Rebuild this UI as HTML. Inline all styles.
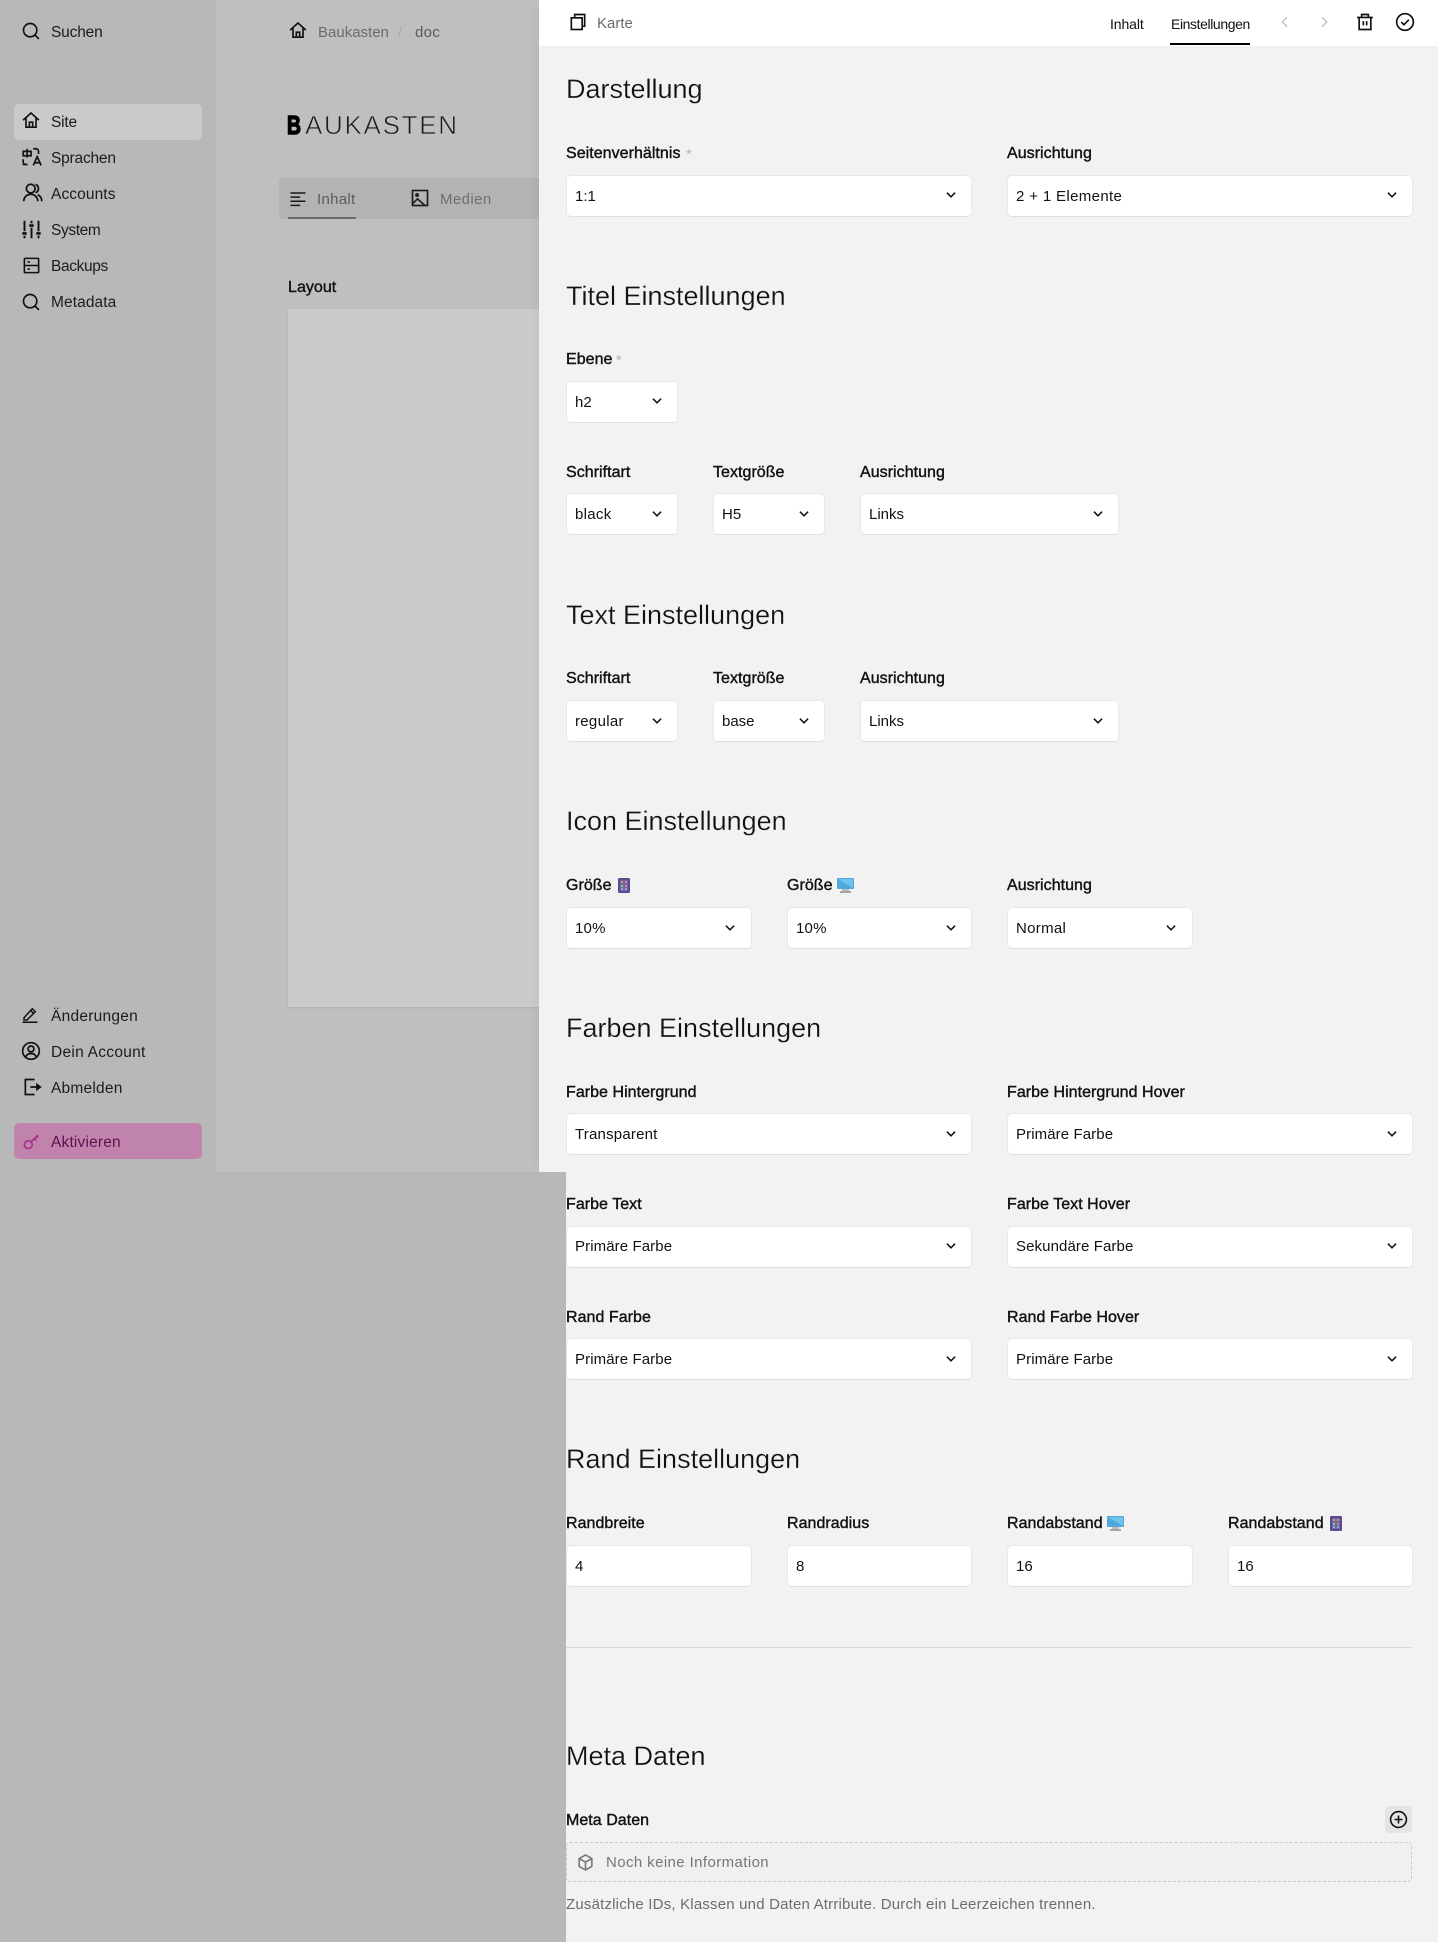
<!DOCTYPE html>
<html lang="de"><head><meta charset="utf-8"><title>Baukasten</title>
<style>
html,body{margin:0;padding:0;width:1438px;height:1942px;overflow:hidden;background:#b8b8b8}
body{position:relative;font-family:"Liberation Sans",sans-serif;font-size:15px;color:#111}
div,span,svg{position:absolute;display:block}
.t{height:20px;line-height:20px;white-space:nowrap;margin-top:1px}
.side{color:#1c1c1c;left:51px;font-size:15.5px}
.h{font-size:27px;height:34px;line-height:34px;left:566px;color:#111;white-space:nowrap;-webkit-text-stroke:.25px #f2f2f2}
.l{font-size:16px;height:20px;line-height:20px;margin-top:1px;white-space:nowrap;color:#111;-webkit-text-stroke:.4px #111;letter-spacing:.04px}
.s{height:40px;background:#fff;border:1px solid #e8e8e8;border-bottom-color:#dedede;border-radius:5px;box-sizing:content-box}
.v{font-size:15px;height:20px;line-height:20px;margin-top:1px;white-space:nowrap;color:#111}
svg.i{fill:none;stroke:#111;stroke-width:2}
svg.c{width:14px;height:14px;fill:none;stroke:#111;stroke-width:2.6}
</style></head><body>

<div style="left:0;top:0;width:216px;height:1172px;background:#b8b8b8"></div>
<div style="left:216px;top:0;width:323px;height:1172px;background:#bfbfbf;box-shadow:inset 1px 0 0 #bbb"></div>

<!-- sidebar -->
<svg class="i" viewBox="0 0 24 24" style="left:21px;top:21px;width:20px;height:20px"><circle cx="11" cy="11" r="8"/><path d="M16.800 16.800L21.500 21.500"/></svg>
<div class="t side" style="top:22px;letter-spacing:-.17px">Suchen</div>

<div style="left:14px;top:104px;width:188px;height:36px;background:#cacaca;border-radius:5px"></div>
<svg class="i" viewBox="0 0 24 24" style="left:21px;top:110px;width:20px;height:21px"><path d="M2.500 11.500L12 3l9.500 8.500M6 9v11h12V9M10 20v-6h4v6"/></svg>
<div class="t side" style="top:112px;letter-spacing:-.2px">Site</div>

<svg class="i" viewBox="0 0 24 24" style="left:21px;top:147px;width:21px;height:21px;stroke-width:1.900"><path d="M7 2v10M2.500 5h9v5h-9zM2.500 14v3a3 3 0 0 0 3 3h2M4 20.500l-2-1M14 2h3a3 3 0 0 1 3 3v3M14 21l4.500-10 4.500 10M15.500 18h6"/></svg>
<div class="t side" style="top:148px;letter-spacing:-.2px">Sprachen</div>

<svg class="i" viewBox="0 0 24 24" style="left:22px;top:182px;width:21px;height:21px"><circle cx="10" cy="7.500" r="5"/><path d="M2 22a8 8 0 0 1 16 0M15.500 2.800a5 5 0 0 1 0 9.400M18 14.500a8 8 0 0 1 4.500 7.500"/></svg>
<div class="t side" style="top:184px;letter-spacing:.1px">Accounts</div>

<svg class="i" viewBox="0 0 24 24" style="left:21px;top:219px;width:21px;height:21px;stroke-width:2.200"><path d="M4 2v12M4 19v3M12 2v3M12 10v12M20 2v12M20 19v3"/><path d="M1.500 16.500h5M9.500 7.500h5M17.500 16.500h5" stroke-width="3"/></svg>
<div class="t side" style="top:220px;letter-spacing:-.38px">System</div>

<svg class="i" viewBox="0 0 24 24" style="left:22px;top:256px;width:19px;height:19px"><rect x="3" y="3" width="18" height="18" rx="1"/><path d="M3 12h18M7 7.500h3M7 16.500h3"/></svg>
<div class="t side" style="top:256px;letter-spacing:-.37px">Backups</div>

<svg class="i" viewBox="0 0 24 24" style="left:21px;top:292px;width:20px;height:20px"><circle cx="11" cy="11" r="8"/><path d="M16.800 16.800L21.500 21.500"/></svg>
<div class="t side" style="top:292px;letter-spacing:.09px">Metadata</div>

<svg class="i" viewBox="0 0 24 24" style="left:21px;top:1005px;width:18px;height:18px"><path d="M4 17l11-12 4 4-11 11H4zM13 7.500l4 4M2 23h20"/></svg>
<div class="t side" style="top:1006px;letter-spacing:.25px">Änderungen</div>

<svg class="i" viewBox="0 0 24 24" style="left:21px;top:1041px;width:20px;height:20px"><circle cx="12" cy="12" r="10"/><circle cx="12" cy="9.500" r="3.500"/><path d="M5.500 19.500c1-3 3.500-4.500 6.500-4.500s5.500 1.500 6.500 4.500"/></svg>
<div class="t side" style="top:1042px;letter-spacing:.27px">Dein Account</div>

<svg class="i" viewBox="0 0 24 24" style="left:22px;top:1077px;width:20px;height:20px"><path d="M15 3H4v18h11M10 12h10"/><path d="M18 9l4 3-4 3z" fill="#111"/></svg>
<div class="t side" style="top:1078px;letter-spacing:.22px">Abmelden</div>

<div style="left:14px;top:1123px;width:188px;height:36px;background:#c084ac;border-radius:5px"></div>
<svg class="i" viewBox="0 0 24 24" style="left:23px;top:1133px;width:17px;height:17px;stroke:#a72f8b;stroke-width:2.400"><circle cx="7.500" cy="16.500" r="5.500"/><path d="M11.500 12.500L21 3M16 8l3 3M19.500 4.500l2 2"/></svg>
<div class="t side" style="top:1132px;color:#5b1150;letter-spacing:.18px">Aktivieren</div>

<!-- main -->
<svg class="i" viewBox="0 0 24 24" style="left:288px;top:20px;width:20px;height:21px"><path d="M2.500 11.500L12 3l9.500 8.500M6 9v11h12V9M10 20v-6h4v6"/></svg>
<div class="t" style="left:318px;top:22px;color:#6c6c6c">Baukasten</div>
<div class="t" style="left:398px;top:22px;color:#ababab">/</div>
<div class="t" style="left:415px;top:22px;color:#5a5a5a;letter-spacing:.3px">doc</div>

<div style="left:287px;top:109px;height:32px;line-height:32px;font-size:26px;font-weight:700;color:#000;transform:scaleX(.74);transform-origin:0 50%;-webkit-text-stroke:1.500px #000">B</div>
<div style="left:305px;top:109px;height:32px;line-height:32px;font-size:26px;letter-spacing:1.700px;color:#1a1a1a;white-space:nowrap;-webkit-text-stroke:.7px #bfbfbf">AUKASTEN</div>

<div style="left:279px;top:178px;width:260px;height:41px;background:#b3b3b3;border-radius:3px 0 0 3px"></div>
<svg class="i" viewBox="0 0 24 24" style="left:289px;top:190px;width:18px;height:18px;stroke:#1a1a1a"><path d="M2 4h20M2 9.500h13M2 15h20M2 20.500h13"/></svg>
<div class="t" style="left:317px;top:189px;color:#5c5c5c;letter-spacing:.3px">Inhalt</div>
<div style="left:288px;top:217px;width:68px;height:2px;background:#6d6d6d"></div>
<svg class="i" viewBox="0 0 24 24" style="left:410px;top:188px;width:20px;height:20px;stroke:#1a1a1a"><rect x="3" y="3" width="18" height="18"/><path d="M3 19l6-6 9 8"/><circle cx="8.500" cy="8.500" r="1.300"/></svg>
<div class="t" style="left:440px;top:189px;color:#6f6f6f;letter-spacing:.4px">Medien</div>

<div class="l" style="left:288px;top:277px;color:#141414;-webkit-text-stroke:.4px #141414">Layout</div>
<div style="left:288px;top:309px;width:251px;height:698px;background:#cbcbcb;box-shadow:0 1px 2px rgba(0,0,0,.08)"></div>

<!-- bottom-left cover -->
<div style="left:0;top:1172px;width:566px;height:770px;background:#b8b8b8"></div>

<!-- panel -->
<div style="left:539px;top:0;width:899px;height:1172px;background:#f2f2f2;box-shadow:-8px 0 10px -6px rgba(0,0,0,.05)"></div>
<div style="left:566px;top:1172px;width:872px;height:770px;background:#f2f2f2"></div>
<div style="left:539px;top:0;width:899px;height:46px;background:#fff"></div>

<svg class="i" viewBox="0 0 24 24" style="left:568px;top:12px;width:20px;height:20px"><rect x="4" y="7" width="13" height="14"/><path d="M8 7V3h12v14h-3"/></svg>
<div class="t" style="left:597px;top:13px;color:#6b6b6b;font-size:15px">Karte</div>
<div class="t" style="left:1110px;top:13px;font-size:14px;letter-spacing:-.1px">Inhalt</div>
<div class="t" style="left:1171px;top:13px;font-size:14px;letter-spacing:-.4px">Einstellungen</div>
<div style="left:1170px;top:43px;width:80px;height:2px;background:#000"></div>
<svg viewBox="0 0 24 24" style="left:1277px;top:14px;width:16px;height:16px;fill:none;stroke:#bdbdbd;stroke-width:2"><path d="M15 5l-7 7 7 7"/></svg>
<svg viewBox="0 0 24 24" style="left:1316px;top:14px;width:16px;height:16px;fill:none;stroke:#bdbdbd;stroke-width:2"><path d="M9 5l7 7-7 7"/></svg>
<svg class="i" viewBox="0 0 24 24" style="left:1355px;top:12px;width:20px;height:20px"><path d="M2.500 6.500h19M8 6.500V3h8v3.500M5 6.500V21h14V6.500M10 11v5M14 11v5"/></svg>
<svg class="i" viewBox="0 0 24 24" style="left:1395px;top:12px;width:20px;height:20px"><circle cx="12" cy="12" r="10"/><path d="M7.500 12l3.200 3.200 6-6"/></svg>

<!-- Darstellung -->
<div class="h" style="top:72px">Darstellung</div>
<div class="l" style="left:566px;top:143px">Seitenverhältnis</div><div class="t" style="left:686px;top:144px;color:#b5b5b5">*</div>
<div class="l" style="left:1007px;top:143px">Ausrichtung</div>
<div class="s" style="left:566px;top:175px;width:404px"></div><div class="v" style="left:575px;top:186px">1:1</div>
<svg class="c" viewBox="0 0 24 24" style="left:944px;top:188px"><path d="M5 8l7 7 7-7"/></svg>
<div class="s" style="left:1007px;top:175px;width:404px"></div><div class="v" style="left:1016px;top:186px;letter-spacing:.35px">2 + 1 Elemente</div>
<svg class="c" viewBox="0 0 24 24" style="left:1385px;top:188px"><path d="M5 8l7 7 7-7"/></svg>

<!-- Titel -->
<div class="h" style="top:279px">Titel Einstellungen</div>
<div class="l" style="left:566px;top:349px">Ebene</div><div class="t" style="left:616px;top:350px;color:#b5b5b5">*</div>
<div class="s" style="left:566px;top:381px;width:110px"></div><div class="v" style="left:575px;top:392px">h2</div>
<svg class="c" viewBox="0 0 24 24" style="left:650px;top:394px"><path d="M5 8l7 7 7-7"/></svg>

<div class="l" style="left:566px;top:462px">Schriftart</div>
<div class="l" style="left:713px;top:462px">Textgröße</div>
<div class="l" style="left:860px;top:462px">Ausrichtung</div>
<div class="s" style="left:566px;top:493px;width:110px"></div><div class="v" style="left:575px;top:504px;letter-spacing:.3px">black</div>
<svg class="c" viewBox="0 0 24 24" style="left:650px;top:507px"><path d="M5 8l7 7 7-7"/></svg>
<div class="s" style="left:713px;top:493px;width:110px"></div><div class="v" style="left:722px;top:504px">H5</div>
<svg class="c" viewBox="0 0 24 24" style="left:797px;top:507px"><path d="M5 8l7 7 7-7"/></svg>
<div class="s" style="left:860px;top:493px;width:257px"></div><div class="v" style="left:869px;top:504px">Links</div>
<svg class="c" viewBox="0 0 24 24" style="left:1091px;top:507px"><path d="M5 8l7 7 7-7"/></svg>

<!-- Text -->
<div class="h" style="top:598px">Text Einstellungen</div>
<div class="l" style="left:566px;top:668px">Schriftart</div>
<div class="l" style="left:713px;top:668px">Textgröße</div>
<div class="l" style="left:860px;top:668px">Ausrichtung</div>
<div class="s" style="left:566px;top:700px;width:110px"></div><div class="v" style="left:575px;top:711px;letter-spacing:.3px">regular</div>
<svg class="c" viewBox="0 0 24 24" style="left:650px;top:714px"><path d="M5 8l7 7 7-7"/></svg>
<div class="s" style="left:713px;top:700px;width:110px"></div><div class="v" style="left:722px;top:711px">base</div>
<svg class="c" viewBox="0 0 24 24" style="left:797px;top:714px"><path d="M5 8l7 7 7-7"/></svg>
<div class="s" style="left:860px;top:700px;width:257px"></div><div class="v" style="left:869px;top:711px">Links</div>
<svg class="c" viewBox="0 0 24 24" style="left:1091px;top:714px"><path d="M5 8l7 7 7-7"/></svg>

<!-- Icon -->
<div class="h" style="top:804px">Icon Einstellungen</div>
<div class="l" style="left:566px;top:875px">Größe</div>
<svg viewBox="0 0 12 15" style="left:618px;top:878px;width:12px;height:15px"><rect width="12" height="15" rx="1.200" fill="#5a4a8f"/><rect x="2" y="2" width="8" height="11" fill="#6f6a9e"/><path d="M3 3h2v2H3zM7 3h2v2H7z" fill="#d88"/><path d="M3 7h2v2H3z" fill="#8c8"/><path d="M7 7h2v2H7z" fill="#e6a"/><path d="M3 10h2v2H3zM7 10h2v2H7z" fill="#8ad"/></svg>
<div class="l" style="left:787px;top:875px">Größe</div>
<svg viewBox="0 0 17 15" style="left:837px;top:878px;width:17px;height:15px"><rect width="17" height="11" rx="1" fill="#4fa8dc"/><path d="M1 1h15v9z" fill="#6fc4ee"/><rect x="5" y="11" width="7" height="2" fill="#bcbcbc"/><rect x="3" y="13" width="11" height="2" fill="#a5a5a5"/></svg>
<div class="l" style="left:1007px;top:875px">Ausrichtung</div>
<div class="s" style="left:566px;top:907px;width:184px"></div><div class="v" style="left:575px;top:918px;letter-spacing:.2px">10%</div>
<svg class="c" viewBox="0 0 24 24" style="left:723px;top:921px"><path d="M5 8l7 7 7-7"/></svg>
<div class="s" style="left:787px;top:907px;width:183px"></div><div class="v" style="left:796px;top:918px;letter-spacing:.2px">10%</div>
<svg class="c" viewBox="0 0 24 24" style="left:944px;top:921px"><path d="M5 8l7 7 7-7"/></svg>
<div class="s" style="left:1007px;top:907px;width:184px"></div><div class="v" style="left:1016px;top:918px;letter-spacing:.3px">Normal</div>
<svg class="c" viewBox="0 0 24 24" style="left:1164px;top:921px"><path d="M5 8l7 7 7-7"/></svg>

<!-- Farben -->
<div class="h" style="top:1011px">Farben Einstellungen</div>
<div class="l" style="left:566px;top:1082px">Farbe Hintergrund</div>
<div class="l" style="left:1007px;top:1082px">Farbe Hintergrund Hover</div>
<div class="s" style="left:566px;top:1113px;width:404px"></div><div class="v" style="left:575px;top:1124px;letter-spacing:.2px">Transparent</div>
<svg class="c" viewBox="0 0 24 24" style="left:944px;top:1127px"><path d="M5 8l7 7 7-7"/></svg>
<div class="s" style="left:1007px;top:1113px;width:404px"></div><div class="v" style="left:1016px;top:1124px;letter-spacing:.1px">Primäre Farbe</div>
<svg class="c" viewBox="0 0 24 24" style="left:1385px;top:1127px"><path d="M5 8l7 7 7-7"/></svg>

<div class="l" style="left:566px;top:1194px">Farbe Text</div>
<div class="l" style="left:1007px;top:1194px">Farbe Text Hover</div>
<div class="s" style="left:566px;top:1226px;width:404px"></div><div class="v" style="left:575px;top:1236px;letter-spacing:.1px">Primäre Farbe</div>
<svg class="c" viewBox="0 0 24 24" style="left:944px;top:1239px"><path d="M5 8l7 7 7-7"/></svg>
<div class="s" style="left:1007px;top:1226px;width:404px"></div><div class="v" style="left:1016px;top:1236px;letter-spacing:.1px">Sekundäre Farbe</div>
<svg class="c" viewBox="0 0 24 24" style="left:1385px;top:1239px"><path d="M5 8l7 7 7-7"/></svg>

<div class="l" style="left:566px;top:1307px">Rand Farbe</div>
<div class="l" style="left:1007px;top:1307px">Rand Farbe Hover</div>
<div class="s" style="left:566px;top:1338px;width:404px"></div><div class="v" style="left:575px;top:1349px;letter-spacing:.1px">Primäre Farbe</div>
<svg class="c" viewBox="0 0 24 24" style="left:944px;top:1352px"><path d="M5 8l7 7 7-7"/></svg>
<div class="s" style="left:1007px;top:1338px;width:404px"></div><div class="v" style="left:1016px;top:1349px;letter-spacing:.1px">Primäre Farbe</div>
<svg class="c" viewBox="0 0 24 24" style="left:1385px;top:1352px"><path d="M5 8l7 7 7-7"/></svg>

<!-- Rand -->
<div class="h" style="top:1442px">Rand Einstellungen</div>
<div class="l" style="left:566px;top:1513px">Randbreite</div>
<div class="l" style="left:787px;top:1513px">Randradius</div>
<div class="l" style="left:1007px;top:1513px">Randabstand</div>
<svg viewBox="0 0 17 15" style="left:1107px;top:1516px;width:17px;height:15px"><rect width="17" height="11" rx="1" fill="#4fa8dc"/><path d="M1 1h15v9z" fill="#6fc4ee"/><rect x="5" y="11" width="7" height="2" fill="#bcbcbc"/><rect x="3" y="13" width="11" height="2" fill="#a5a5a5"/></svg>
<div class="l" style="left:1228px;top:1513px">Randabstand</div>
<svg viewBox="0 0 12 15" style="left:1330px;top:1516px;width:12px;height:15px"><rect width="12" height="15" rx="1.200" fill="#5a4a8f"/><rect x="2" y="2" width="8" height="11" fill="#6f6a9e"/><path d="M3 3h2v2H3zM7 3h2v2H7z" fill="#d88"/><path d="M3 7h2v2H3z" fill="#8c8"/><path d="M7 7h2v2H7z" fill="#e6a"/><path d="M3 10h2v2H3zM7 10h2v2H7z" fill="#8ad"/></svg>
<div class="s" style="left:566px;top:1545px;width:184px"></div><div class="v" style="left:575px;top:1556px">4</div>
<div class="s" style="left:787px;top:1545px;width:183px"></div><div class="v" style="left:796px;top:1556px">8</div>
<div class="s" style="left:1007px;top:1545px;width:184px"></div><div class="v" style="left:1016px;top:1556px">16</div>
<div class="s" style="left:1228px;top:1545px;width:183px"></div><div class="v" style="left:1237px;top:1556px">16</div>

<div style="left:566px;top:1647px;width:846px;height:1px;background:#d8d8d8"></div>

<!-- Meta -->
<div class="h" style="top:1739px">Meta Daten</div>
<div class="l" style="left:566px;top:1810px">Meta Daten</div>
<div style="left:1385px;top:1806px;width:27px;height:27px;background:#e4e4e4;border-radius:4px"></div>
<svg class="i" viewBox="0 0 24 24" style="left:1389px;top:1810px;width:19px;height:19px"><circle cx="12" cy="12" r="10"/><path d="M12 7v10M7 12h10"/></svg>
<div style="left:566px;top:1842px;width:844px;height:38px;background:#f0f0f0;border:1px dashed #c9c9c9;border-radius:4px"></div>
<svg class="i" viewBox="0 0 24 24" style="left:576px;top:1853px;width:19px;height:19px;stroke:#777"><path d="M12 2.500l8 4.500v10l-8 4.500-8-4.500V7zM4 7l8 4.500L20 7M12 11.500V21.500"/></svg>
<div class="t" style="left:606px;top:1852px;color:#777;letter-spacing:.4px">Noch keine Information</div>
<div class="t" style="left:566px;top:1894px;color:#6d6d6d;letter-spacing:.19px">Zusätzliche IDs, Klassen und Daten Atrribute. Durch ein Leerzeichen trennen.</div>

</body></html>
